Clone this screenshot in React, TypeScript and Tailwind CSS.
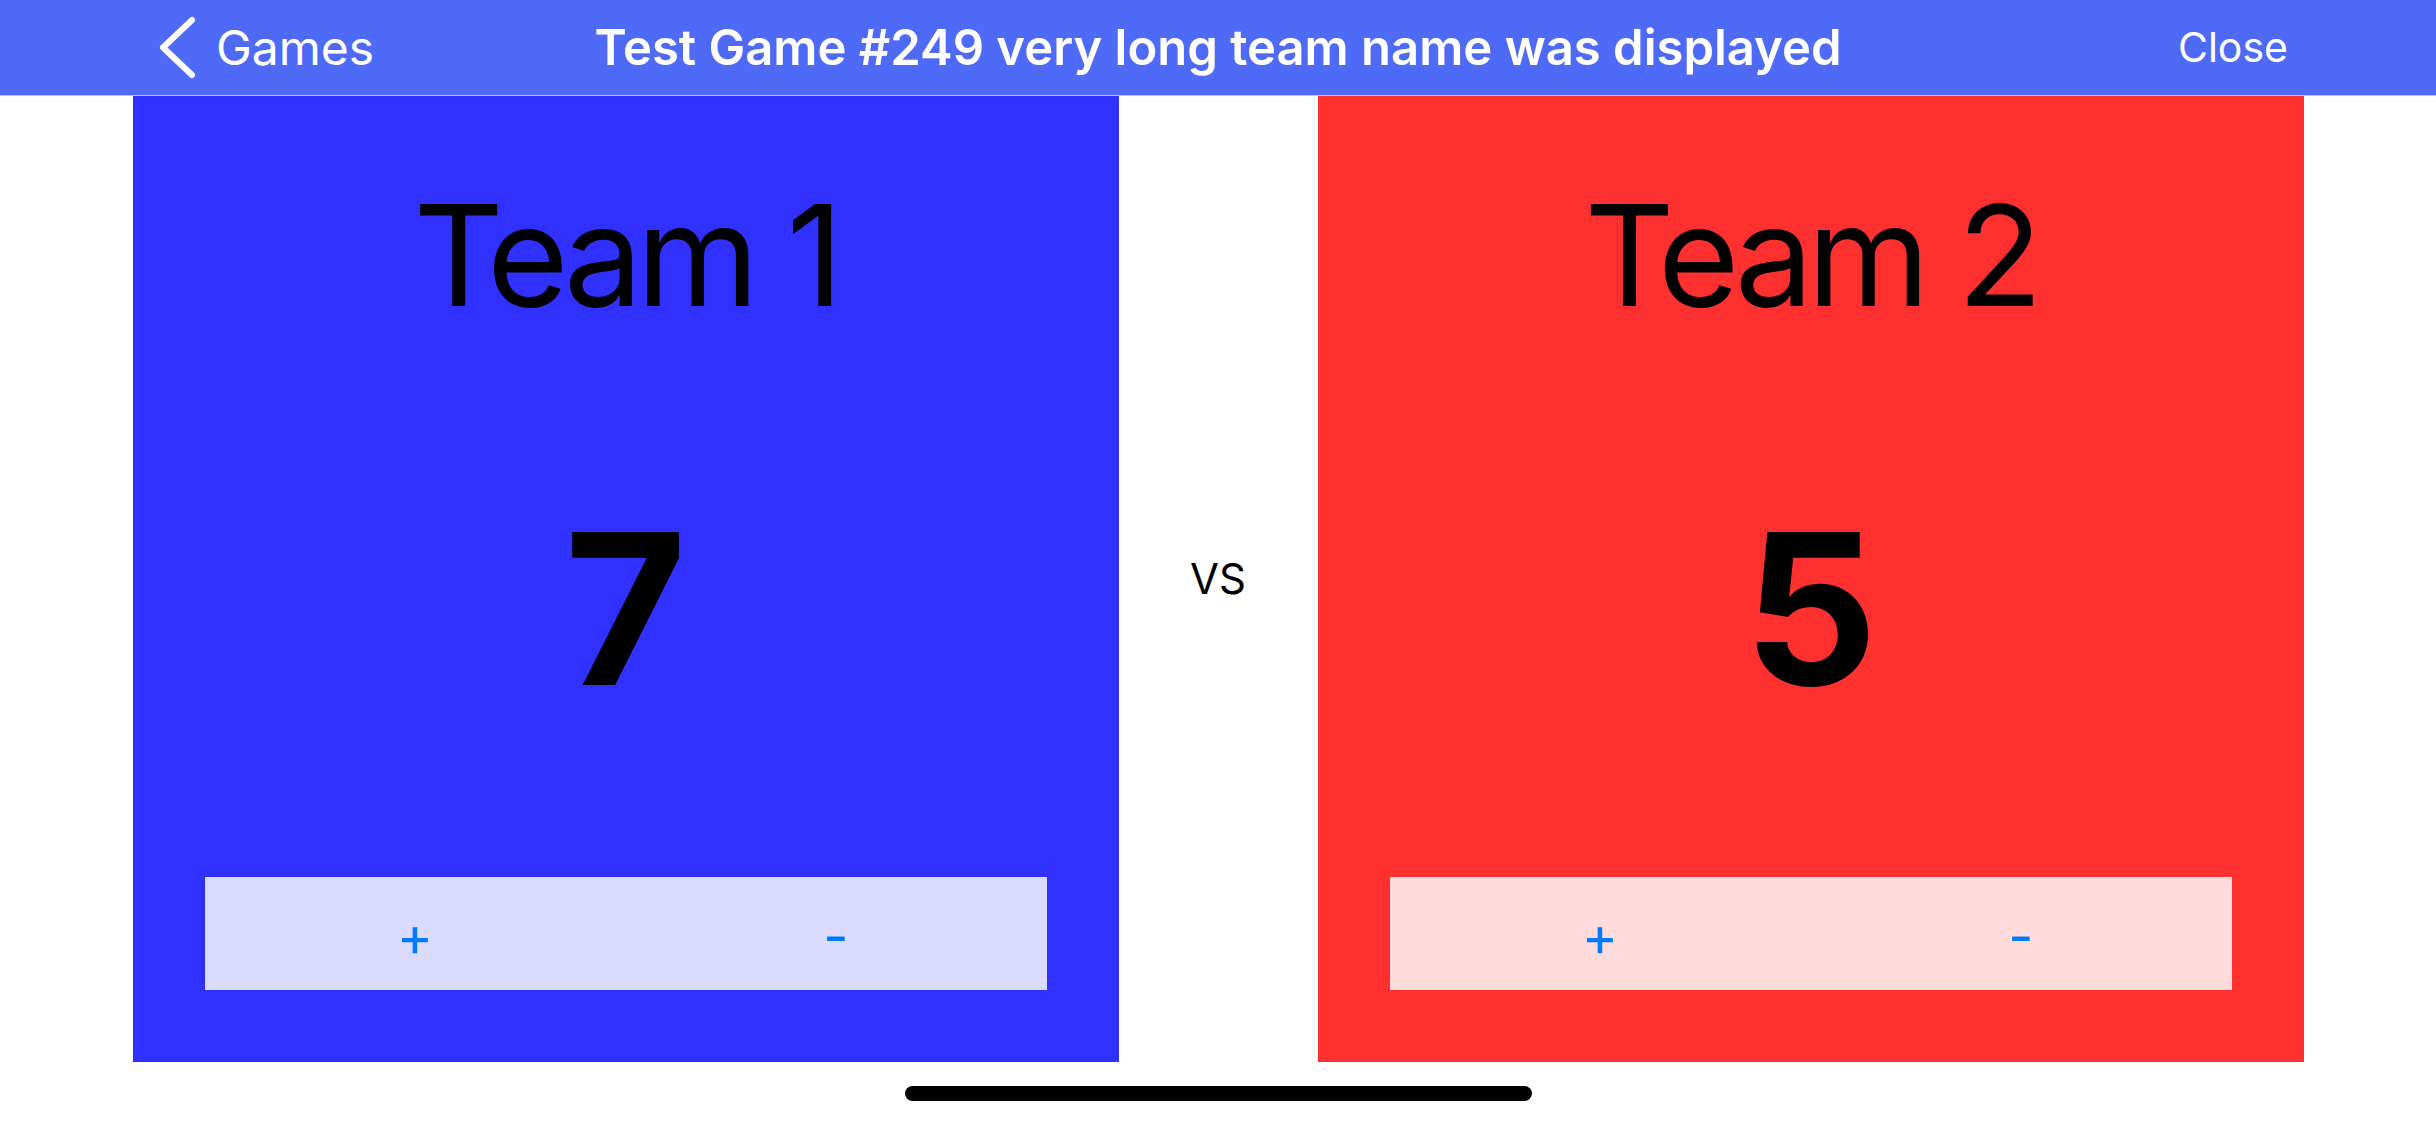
import { useState } from "react";

const TEAMS = [
    { name: "Team 1", score: 7, panel: "bg-[#3030ff]", bar: "bg-[#dbdbff]" },
    { name: "Team 2", score: 5, panel: "bg-[#ff3030]", bar: "bg-[#ffdbdb]" },
];

function Chevron() {
    return (
        <svg width="39" height="67" viewBox="0 0 39 67" fill="none">
            <path
                d="M35 6 L6 33.5 L35 61"
                stroke="white"
                strokeWidth="6"
                strokeLinecap="round"
                strokeLinejoin="round"
            />
        </svg>
    );
}

function TeamPanel({
    team,
    score,
    onPlus,
    onMinus,
}: {
    team: (typeof TEAMS)[number];
    score: number;
    onPlus: () => void;
    onMinus: () => void;
}) {
    return (
        <section className={`w-[986px] h-[966px] flex flex-col px-[72px] pt-[89px] pb-[72px] ${team.panel}`}>
            <h2 className="text-[140px] leading-none text-black text-center tracking-[-6px]">
                {team.name}
            </h2>
            <div className="flex-1 flex items-center justify-center pt-[16px]">
                <span className="text-[210px] leading-none font-bold text-black">{score}</span>
            </div>
            <div className={`h-[113px] flex ${team.bar}`}>
                <button
                    onClick={onPlus}
                    className="flex-1 flex items-center justify-center pt-[6px] text-[55px] leading-none text-[#007aff]"
                >
                    +
                </button>
                <button
                    onClick={onMinus}
                    className="flex-1 flex items-center justify-center pt-[6px] text-[55px] leading-none text-[#007aff]"
                >
                    -
                </button>
            </div>
        </section>
    );
}

export default function App() {
    const [scores, setScores] = useState(TEAMS.map((t) => t.score));

    const bump = (i: number, d: number) =>
        setScores((s) => s.map((v, j) => (j === i ? Math.max(0, v + d) : v)));

    return (
        <div className="min-h-screen bg-white font-['Inter',sans-serif] overflow-hidden">
            {/* nav bar */}
            <header className="h-[96px] bg-[#506af8] border-b border-[#c2c2d0] grid grid-cols-[1fr_auto_1fr] items-center text-white">
                <div className="flex items-center pl-[157px]">
                    <Chevron />
                    <span className="ml-[20px] text-[48px] leading-none">Games</span>
                </div>
                <h1 className="text-[49px] leading-none font-semibold">
                    Test Game #249 very long team name was displayed
                </h1>
                <div className="flex justify-end pr-[148px]">
                    <span className="text-[41px] leading-none">Close</span>
                </div>
            </header>

            <main className="flex justify-center">
                <TeamPanel
                    team={TEAMS[0]}
                    score={scores[0]}
                    onPlus={() => bump(0, 1)}
                    onMinus={() => bump(0, -1)}
                />
                <div className="w-[199px] flex items-center justify-center">
                    <span className="text-[42px] leading-none text-black">VS</span>
                </div>
                <TeamPanel
                    team={TEAMS[1]}
                    score={scores[1]}
                    onPlus={() => bump(1, 1)}
                    onMinus={() => bump(1, -1)}
                />
            </main>

            {/* home indicator */}
            <div className="mt-[24px] mx-auto w-[627px] h-[15px] rounded-full bg-black" />
        </div>
    );
}
